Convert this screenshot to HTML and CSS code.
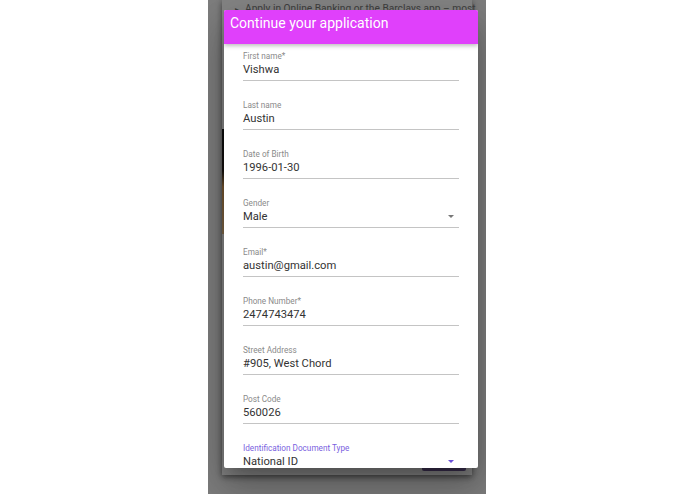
FILE: index.html
```html
<!DOCTYPE html>
<html>
<head>
<meta charset="utf-8">
<link rel="stylesheet" href="styles.css">
</head>
<body>
<div class="stage">
  <div class="card">
    <div class="card-line"><span class="bullet">&#9656;</span>Apply in Online Banking or the Barclays app – most</div>
    <div class="card-image"></div>
    <div class="card-actions"><span class="card-btn"></span></div>
  </div>
  <div class="overlay"></div>
  <div class="dialog">
    <div class="dialog-header">Continue your application</div>
    <div class="dialog-body">
      <div class="field"><div class="label">First name*</div><div class="value">Vishwa</div></div>
      <div class="field"><div class="label">Last name</div><div class="value">Austin</div></div>
      <div class="field"><div class="label">Date of Birth</div><div class="value">1996-01-30</div></div>
      <div class="field select"><div class="label">Gender</div><div class="value">Male<span class="arrow"></span></div></div>
      <div class="field"><div class="label">Email*</div><div class="value">austin@gmail.com</div></div>
      <div class="field"><div class="label">Phone Number*</div><div class="value">2474743474</div></div>
      <div class="field"><div class="label">Street Address</div><div class="value">#905, West Chord</div></div>
      <div class="field"><div class="label">Post Code</div><div class="value">560026</div></div>
      <div class="field select focused"><div class="label">Identification Document Type</div><div class="value">National ID<span class="arrow"></span></div></div>
    </div>
  </div>
</div>
</body>
</html>
```
FILE: styles.css
```css
html, body {
  margin: 0;
  padding: 0;
  background: #ffffff;
  font-family: Roboto, "Liberation Sans", sans-serif;
}
.stage {
  position: relative;
  width: 278px;
  height: 494px;
  margin-left: 208px;
  background: #f2f2f2;
  overflow: hidden;
}
.card {
  margin-left: 14px;
  width: 250px;
  height: 475px;
  background: #ffffff;
  box-shadow: 0 2px 6px rgba(0,0,0,0.5);
  display: flex;
  flex-direction: column;
}
.card-line {
  margin-top: 2px;
  padding-left: 13px;
  font-size: 10.2px;
  color: #7a7a7a;
  white-space: nowrap;
  line-height: 14px;
}
.bullet {
  font-size: 8px;
  margin-right: 6px;
}
.card-image {
  margin-top: 112px;
  width: 200px;
  height: 105px;
  background: linear-gradient(180deg, #1a1a1a 0%, #2a2420 40%, #e3a55a 55%, #f2c48a 100%);
}
.card-actions {
  margin-top: auto;
  display: flex;
  justify-content: flex-end;
  padding: 0 6px 4px 0;
}
.card-btn {
  width: 44px;
  height: 10px;
  background: #6f5a96;
  border-radius: 2px;
}
.overlay {
  position: absolute;
  inset: 0;
  background: rgba(0,0,0,0.48);
}
.dialog {
  position: absolute;
  left: 16px;
  top: 10px;
  width: 254px;
  height: 458px;
  background: #ffffff;
  border-radius: 2px;
  overflow: hidden;
  display: flex;
  flex-direction: column;
  box-shadow: 0 11px 15px -7px rgba(0,0,0,0.25), 0 24px 38px 3px rgba(0,0,0,0.16), 0 9px 46px 8px rgba(0,0,0,0.12);
}
.dialog-header {
  flex: none;
  height: 34px;
  background: #e040fb;
  color: #ffffff;
  font-size: 14px;
  line-height: 27px;
  padding-left: 6px;
  box-shadow: 0 2px 4px rgba(0,0,0,0.25);
  position: relative;
  z-index: 1;
  box-sizing: border-box;
}
.dialog-body {
  flex: 1;
  padding: 7px 19px 0 19px;
  overflow: hidden;
}
.field {
  margin-bottom: 19px;
  border-bottom: 1px solid #c4c4c4;
  padding-bottom: 3px;
}
.label {
  font-size: 8.2px;
  line-height: 11px;
  color: #8a8a8a;
}
.value {
  font-size: 11.2px;
  line-height: 15px;
  color: #333333;
  display: flex;
  align-items: center;
  justify-content: space-between;
}
.arrow {
  width: 0;
  height: 0;
  border-left: 3.5px solid transparent;
  border-right: 3.5px solid transparent;
  border-top: 3.5px solid #777;
  margin-right: 5px;
}
.focused .label {
  color: #7a5fe0;
}
.focused .arrow {
  border-top-color: #6a4fd8;
}
```
